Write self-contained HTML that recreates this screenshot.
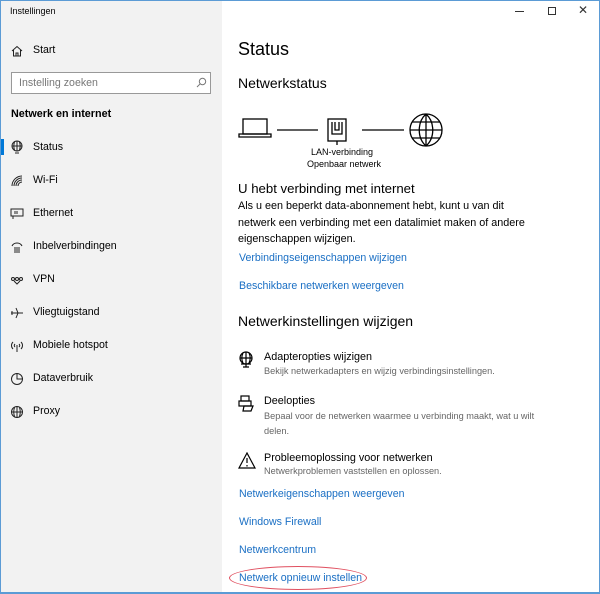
<!DOCTYPE html>
<html><head><meta charset="utf-8"><style>
*{margin:0;padding:0;box-sizing:border-box}
body{width:600px;height:594px;position:relative;background:#fff;font-family:"Segoe UI","Liberation Sans",sans-serif;color:#000;overflow:hidden}
.win{position:absolute;left:0;top:0;width:600px;height:594px;border:1px solid #5b9bd5;border-bottom:2px solid #5b9bd5}
.side{position:absolute;left:1px;top:1px;width:221px;height:591px;background:#f2f2f2}
.t{position:absolute;white-space:nowrap}
.nav{font-size:10.6px;left:33px}
.ic{position:absolute;left:10px}
.link{font-size:10.6px;color:#1a6fc4;left:239px}
.sub{font-size:9.2px;color:#666}
</style></head><body>
<div class="win"></div>
<div class="side"></div>
<div class="t" style="left:10px;top:6px;font-size:9px">Instellingen</div>
<div style="position:absolute;left:515px;top:11px;width:9px;height:1px;background:#333"></div>
<div style="position:absolute;left:548px;top:7px;width:8px;height:8px;border:1px solid #333"></div>
<div class="t" style="left:578px;top:3px;font-size:12px;color:#333">✕</div>

<svg class="ic" style="top:44px" width="14" height="14" viewBox="0 0 14 14" fill="none" stroke="#222"><path d="M2 7L7 2.5 12 7M3.5 6v6h7V6M6 12V9h2v3"/></svg>
<div class="t nav" style="top:44px">Start</div>
<div style="position:absolute;left:11px;top:72px;width:200px;height:22px;border:1px solid #999;background:#fff"></div>
<div class="t" style="left:19px;top:77px;font-size:10.6px;color:#777">Instelling zoeken</div>
<svg style="position:absolute;left:196px;top:77px" width="11" height="11" viewBox="0 0 11 11" fill="none" stroke="#777"><circle cx="6.5" cy="4.5" r="3.2"/><path d="M4.2 6.8L1 10"/></svg>
<div class="t" style="left:11px;top:108px;font-size:10.8px;font-weight:bold">Netwerk en internet</div>

<div style="position:absolute;left:1px;top:139px;width:3px;height:16px;background:#0078d7"></div>
<svg class="ic" style="top:140px" width="14" height="14" viewBox="0 0 14 14" fill="none" stroke="#222"><circle cx="7" cy="6" r="5"/><path d="M2 6h10M7 1v10M4.5 2c-1 3-1 5 0 8M9.5 2c1 3 1 5 0 8M5 13h4"/></svg>
<div class="t nav" style="top:141px">Status</div>
<svg class="ic" style="top:174px" width="14" height="14" viewBox="0 0 14 14" fill="none" stroke="#222"><path d="M2 12a10 10 0 0 1 10-10M4 12a8 8 0 0 1 8-8M6 12a6 6 0 0 1 6-6M8 12a4 4 0 0 1 4-4"/></svg>
<div class="t nav" style="top:174px">Wi-Fi</div>
<svg class="ic" style="top:207px" width="14" height="14" viewBox="0 0 14 14" fill="none" stroke="#222"><rect x="1" y="2" width="12" height="7"/><path d="M3 9v3M5 4v3M7 4v3"/></svg>
<div class="t nav" style="top:207px">Ethernet</div>
<svg class="ic" style="top:240px" width="14" height="14" viewBox="0 0 14 14" fill="none" stroke="#222"><path d="M2 6c2-4 8-4 10 0M4 8h6M4 10h6M4 12h6"/></svg>
<div class="t nav" style="top:240px">Inbelverbindingen</div>
<svg class="ic" style="top:273px" width="14" height="14" viewBox="0 0 14 14" fill="none" stroke="#222"><circle cx="3" cy="6" r="1.5"/><circle cx="7" cy="6" r="1.5"/><circle cx="11" cy="6" r="1.5"/><path d="M4 8l3 3 3-3"/></svg>
<div class="t nav" style="top:273px">VPN</div>
<svg class="ic" style="top:306px" width="14" height="14" viewBox="0 0 14 14" fill="none" stroke="#222"><path d="M1 7h12M6 2l2 5-2 5M2 5v4"/></svg>
<div class="t nav" style="top:306px">Vliegtuigstand</div>
<svg class="ic" style="top:339px" width="14" height="14" viewBox="0 0 14 14" fill="none" stroke="#222"><path d="M7 6v7M3 3c-2 2-2 5 0 7M11 3c2 2 2 5 0 7M5 5c-1 1-1 2 0 3M9 5c1 1 1 2 0 3"/></svg>
<div class="t nav" style="top:339px">Mobiele hotspot</div>
<svg class="ic" style="top:372px" width="14" height="14" viewBox="0 0 14 14" fill="none" stroke="#222"><circle cx="7" cy="7" r="5.5"/><path d="M7 1.5V7h5.5"/></svg>
<div class="t nav" style="top:372px">Dataverbruik</div>
<svg class="ic" style="top:405px" width="14" height="14" viewBox="0 0 14 14" fill="none" stroke="#222"><circle cx="7" cy="7" r="5.5"/><path d="M1.5 7h11M7 1.5v11M4.5 2.5c-1 3-1 6 0 9M9.5 2.5c1 3 1 6 0 9"/></svg>
<div class="t nav" style="top:405px">Proxy</div>

<div class="t" style="left:238px;top:39px;font-size:18px">Status</div>
<div class="t" style="left:238px;top:75px;font-size:14px">Netwerkstatus</div>
<svg style="position:absolute;left:236px;top:110px" width="210" height="50" viewBox="0 0 210 50" fill="none" stroke="#000" stroke-width="1.3">
<rect x="7" y="9" width="24" height="15"/><path d="M3 24h32v3H3z"/>
<path d="M41 20h41"/>
<rect x="92" y="9" width="18" height="22"/><path d="M96 12v12h10V12M99 12v8h4v-8M101 31v4"/>
<path d="M126 20h42"/>
<circle cx="190" cy="20" r="16"/><path d="M174 20h32M190 4v32M176 12h28M176 28h28M190 4c-9 8-9 24 0 32M190 4c9 8 9 24 0 32"/>
</svg>
<div class="t" style="left:311px;top:147px;font-size:9px">LAN-verbinding</div>
<div class="t" style="left:307px;top:159px;font-size:9px">Openbaar netwerk</div>
<div class="t" style="left:238px;top:181px;font-size:13.2px">U hebt verbinding met internet</div>
<div class="t" style="left:238px;top:198px;font-size:10.8px;line-height:16.5px;white-space:normal;width:305px">Als u een beperkt data-abonnement hebt, kunt u van dit netwerk een verbinding met een datalimiet maken of andere eigenschappen wijzigen.</div>
<div class="t link" style="top:252px">Verbindingseigenschappen wijzigen</div>
<div class="t link" style="top:280px">Beschikbare netwerken weergeven</div>
<div class="t" style="left:238px;top:313px;font-size:14px">Netwerkinstellingen wijzigen</div>

<svg style="position:absolute;left:238px;top:351px" width="16" height="18" viewBox="0 0 16 18" fill="none" stroke="#000" stroke-width="1.2"><circle cx="8" cy="7" r="6"/><path d="M2 7h12M8 1v12M5 2c-1.5 3-1.5 7 0 10M11 2c1.5 3 1.5 7 0 10M3 13h10M8 13v3M5 16h6"/></svg>
<div class="t" style="left:264px;top:351px;font-size:10.8px">Adapteropties wijzigen</div>
<div class="t sub" style="left:264px;top:366px">Bekijk netwerkadapters en wijzig verbindingsinstellingen.</div>
<svg style="position:absolute;left:238px;top:395px" width="16" height="18" viewBox="0 0 16 18" fill="none" stroke="#000" stroke-width="1.2"><rect x="3" y="1" width="8" height="5"/><rect x="1" y="6" width="12" height="5"/><path d="M6 11h9l-2 5H5z"/></svg>
<div class="t" style="left:264px;top:395px;font-size:10.8px">Deelopties</div>
<div class="t sub" style="left:264px;top:409px;line-height:15px;white-space:normal;width:280px">Bepaal voor de netwerken waarmee u verbinding maakt, wat u wilt delen.</div>
<svg style="position:absolute;left:238px;top:452px" width="18" height="17" viewBox="0 0 18 17" fill="none" stroke="#000" stroke-width="1.2"><path d="M9 1L1 16h16z"/><path d="M9 6v5M9 13v1.5"/></svg>
<div class="t" style="left:264px;top:452px;font-size:10.8px">Probleemoplossing voor netwerken</div>
<div class="t sub" style="left:264px;top:466px">Netwerkproblemen vaststellen en oplossen.</div>

<div class="t link" style="top:488px">Netwerkeigenschappen weergeven</div>
<div class="t link" style="top:516px">Windows Firewall</div>
<div class="t link" style="top:544px">Netwerkcentrum</div>
<div class="t link" style="top:572px">Netwerk opnieuw instellen</div>
<div style="position:absolute;left:229px;top:566px;width:138px;height:24px;border:1px solid #e05060;border-radius:50%"></div>
</body></html>
